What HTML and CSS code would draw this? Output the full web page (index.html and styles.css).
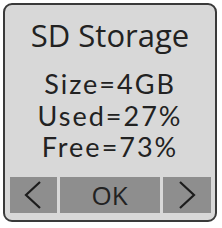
FILE: index.html
```html
<!DOCTYPE html>
<html lang="en">
<head>
    <meta charset="UTF-8">
    <title>SD Storage</title>
    <link rel="stylesheet" href="styles.css">
</head>
<body>
    <div class="screen">
        <h1 class="title">SD Storage</h1>
        <div class="info">
            <p>Size=4GB</p>
            <p>Used=27%</p>
            <p>Free=73%</p>
        </div>
        <div class="buttons">
            <button class="btn" type="button">
                <svg width="20" height="28" viewBox="0 0 20 28"><polyline points="17,1 3,14 17,27" fill="none" stroke="#1c1c1c" stroke-width="2.2"/></svg>
            </button>
            <button class="btn ok" type="button">OK</button>
            <button class="btn" type="button">
                <svg width="20" height="28" viewBox="0 0 20 28"><polyline points="3,1 17,14 3,27" fill="none" stroke="#1c1c1c" stroke-width="2.2"/></svg>
            </button>
        </div>
    </div>
</body>
</html>
```
FILE: styles.css
```css
body {
    margin: 0;
    background: #fff;
    font-family: "Open Sans", sans-serif;
    color: #222;
}
.screen {
    margin: 3px;
    width: 210px;
    height: 215px;
    border: 2px solid #3a3a3a;
    border-radius: 9px;
    background: #d8d8d8;
    display: flex;
    flex-direction: column;
    align-items: center;
}
.title {
    margin: 12px 0 0;
    font-size: 31px;
    font-weight: normal;
    line-height: 36px;
}
.info {
    margin-top: 15px;
    text-align: center;
}
.info p {
    margin: 0;
    font-family: Lato, sans-serif;
    font-size: 27px;
    line-height: 31.5px;
    letter-spacing: 2px;
}
.buttons {
    margin-top: auto;
    margin-bottom: 7px;
    display: grid;
    grid-template-columns: 47px 100px 48px;
    gap: 3px;
    height: 36px;
}
.btn {
    border: none;
    padding: 0;
    background: #8e8e8e;
    display: flex;
    align-items: center;
    justify-content: center;
    font-family: "Open Sans", sans-serif;
    color: #222;
}
.ok {
    font-size: 26px;
}
```
